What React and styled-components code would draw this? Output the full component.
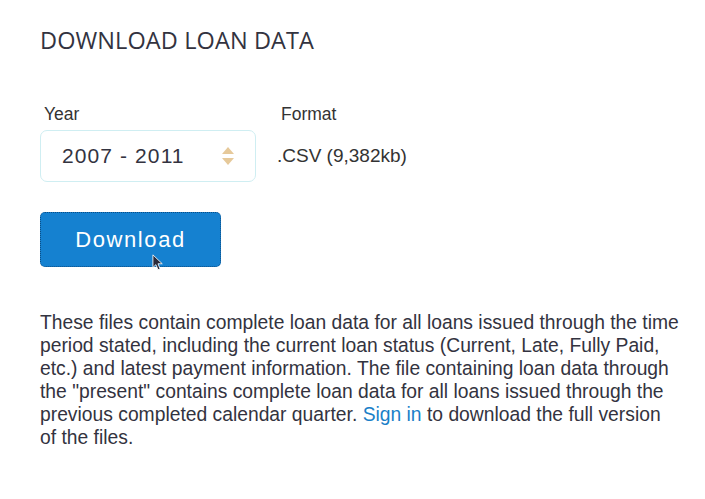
import styled, { createGlobalStyle } from "styled-components";

const GlobalStyle = createGlobalStyle`
  body {
    margin: 0;
    background: #ffffff;
    font-family: "Liberation Sans", Arial, sans-serif;
    color: #333340;
  }
`;

const Page = styled.div`
  padding: 24px 20px 0 40px;
  width: 705px;
  box-sizing: border-box;
`;

const Title = styled.h2`
  margin: 0;
  font-family: "Open Sans", sans-serif;
  font-weight: 400;
  font-size: 23.5px;
  line-height: 32px;
  letter-spacing: 0.1px;
  color: #33333f;
`;

const FieldRow = styled.div`
  display: flex;
  gap: 25px;
  margin-top: 46px;
`;

const Field = styled.div`
  display: flex;
  flex-direction: column;
`;

const Label = styled.label`
  font-size: 17.5px;
  line-height: 24px;
  color: #333;
  margin-left: ${(p) => p.$indent || 0}px;
  height: 28px;
`;

const SelectBox = styled.div`
  width: 216px;
  height: 52px;
  box-sizing: border-box;
  border: 1px solid #cfeef2;
  border-radius: 7px;
  display: flex;
  align-items: center;
  justify-content: space-between;
  padding: 0 21px 0 21px;
  font-size: 21px;
  color: #33333f;
  letter-spacing: 1.1px;
`;

const Arrows = styled.span`
  display: flex;
  flex-direction: column;
  gap: 4px;
`;

const Value = styled.div`
  font-size: 19px;
  color: #333;
  height: 52px;
  margin-left: -4px;
  display: flex;
  align-items: center;
`;

const ButtonWrap = styled.div`
  position: relative;
  margin-top: 30px;
  width: 181px;
`;

const Button = styled.button`
  display: block;
  width: 181px;
  height: 55px;
  border: 1px dotted #0b4d85;
  border-radius: 5px;
  background: #1581d0;
  color: #fff;
  font-family: "Liberation Sans", Arial, sans-serif;
  font-size: 22px;
  letter-spacing: 1.6px;
  cursor: pointer;
`;

const Cursor = styled.svg`
  position: absolute;
  left: 112px;
  top: 42px;
`;

const Text = styled.p`
  margin: 44px 0 0;
  font-size: 19.3px;
  line-height: 23px;
  color: #333340;
  width: 642px;
`;

const Link = styled.a`
  color: #1a7fc8;
  text-decoration: none;
`;

export default function App() {
  return (
    <>
      <GlobalStyle />
      <Page>
        <Title>DOWNLOAD LOAN DATA</Title>
        <FieldRow>
          <Field>
            <Label $indent={4}>Year</Label>
            <SelectBox>
              2007 - 2011
              <Arrows>
                <svg width="12" height="7" viewBox="0 0 12 7">
                  <path d="M6 0 L12 7 L0 7 Z" fill="#e6c99a" />
                </svg>
                <svg width="12" height="7" viewBox="0 0 12 7">
                  <path d="M0 0 L12 0 L6 7 Z" fill="#e6c99a" />
                </svg>
              </Arrows>
            </SelectBox>
          </Field>
          <Field>
            <Label>Format</Label>
            <Value>.CSV (9,382kb)</Value>
          </Field>
        </FieldRow>
        <ButtonWrap>
          <Button>Download</Button>
          <Cursor width="12" height="17" viewBox="0 0 14 20">
            <path
              d="M1 1 L1 16 L4.5 12.5 L7 18.5 L9.5 17.5 L7 11.5 L12 11.5 Z"
              fill="#2a2a3a"
              stroke="#fff"
              strokeWidth="1"
            />
          </Cursor>
        </ButtonWrap>
        <Text>
          These files contain complete loan data for all loans issued through
          the time period stated, including the current loan status (Current,
          Late, Fully Paid, etc.) and latest payment information. The file
          containing loan data through the "present" contains complete loan
          data for all loans issued through the previous completed calendar
          quarter. <Link href="#">Sign in</Link> to download the full version
          of the files.
        </Text>
      </Page>
    </>
  );
}
